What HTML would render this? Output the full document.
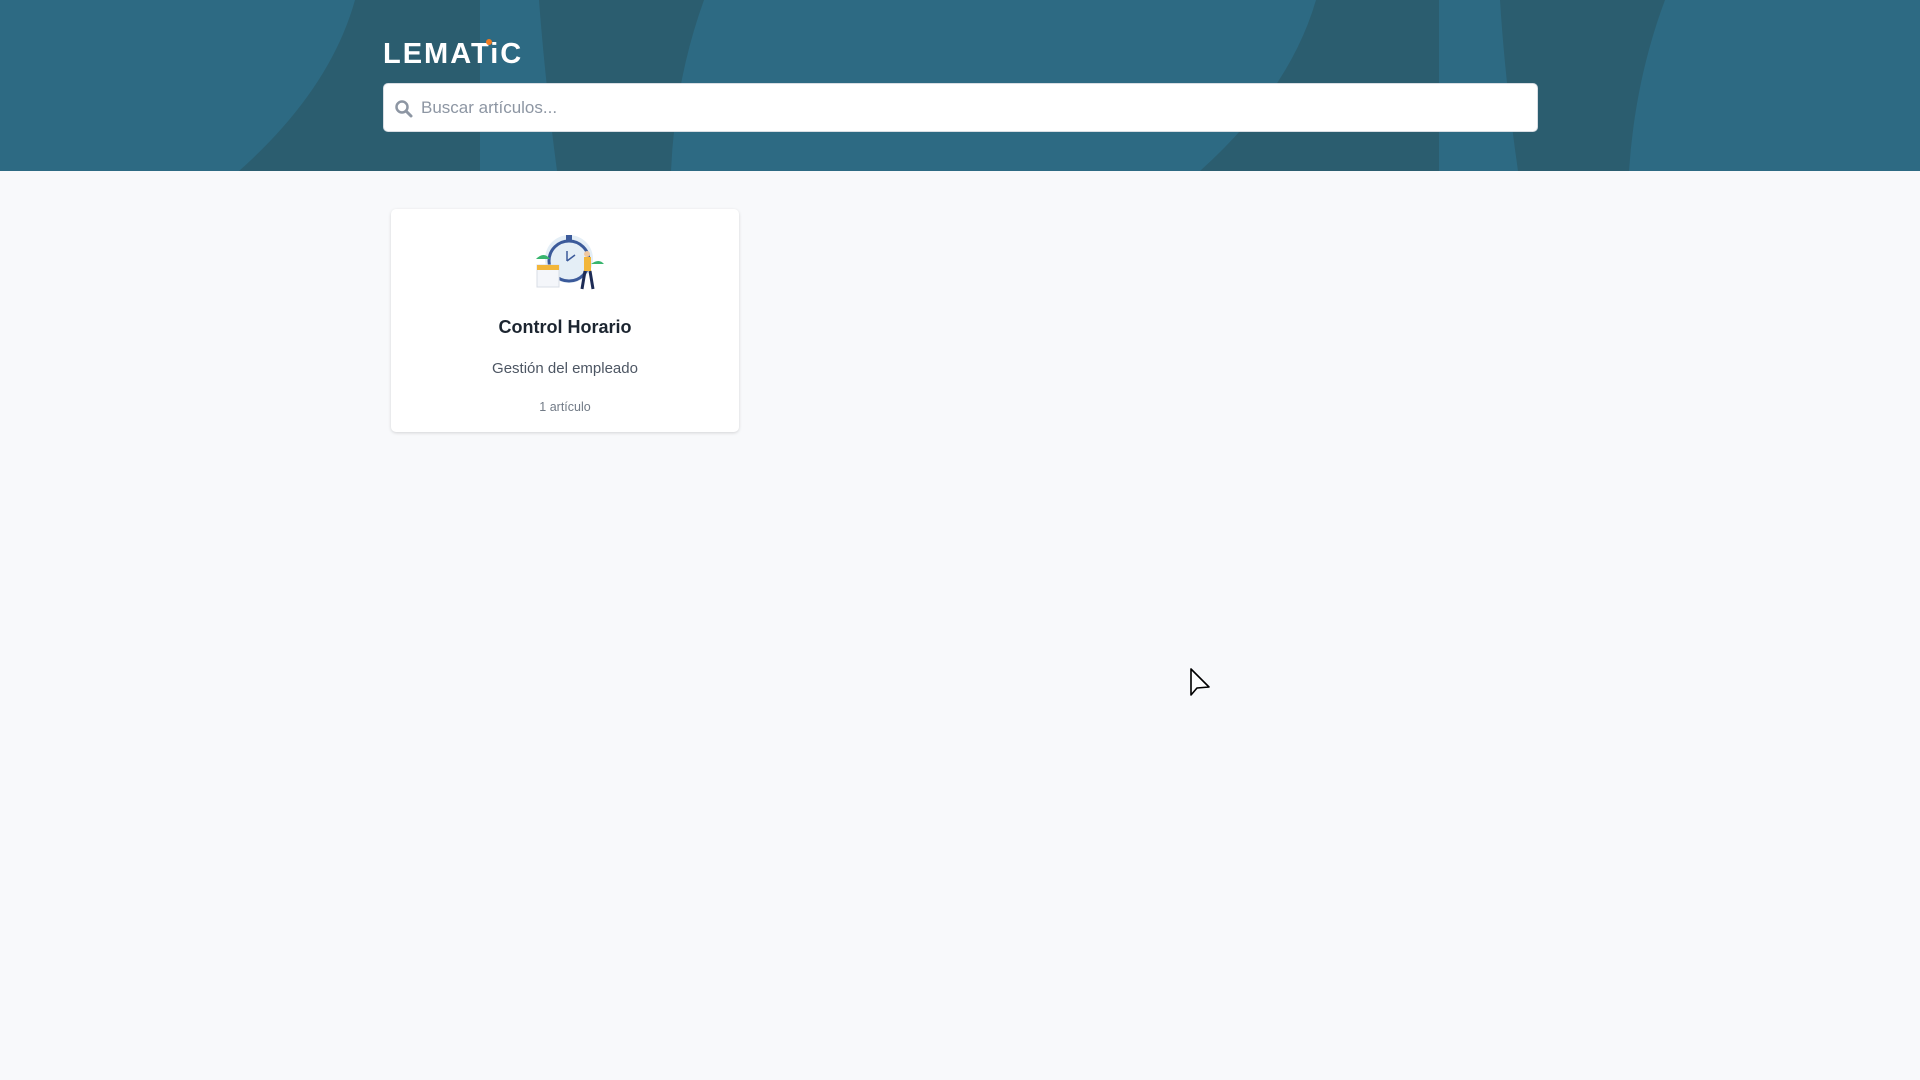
<!DOCTYPE html>
<html><head><meta charset="utf-8"><style>
body{margin:0;width:1920px;height:1080px;background:#f8f9fb;font-family:"Liberation Sans",sans-serif;overflow:hidden;position:relative}
.hdr{position:absolute;left:0;top:0;width:1920px;height:171px;background:#2d6a83;overflow:hidden}
.logo{position:absolute;left:383px;top:38px;color:#fff;font-weight:bold;font-size:29px;letter-spacing:2px}
.search{position:absolute;left:383px;top:83px;width:1155px;height:49px;background:#fff;border-radius:5px;box-sizing:border-box;border:1px solid #d8dde3}
.search span{position:absolute;left:37px;top:14px;font-size:17px;color:#8d96a3}
.card{position:absolute;left:391px;top:209px;width:348px;height:223px;background:#fff;border-radius:5px;box-shadow:0 1px 3px rgba(0,0,0,.15);text-align:center}
.t{position:absolute;top:108px;width:100%;font-size:18px;font-weight:bold;color:#1c2530}
.s{position:absolute;top:151px;width:100%;font-size:15px;color:#4d5663}
.c{position:absolute;top:191px;width:100%;font-size:12.5px;color:#717a86}
</style></head><body>
<div class="hdr">
<svg width="1920" height="171" style="position:absolute;left:0;top:0">
<g fill="#2b5d6f">
<path d="M355 0 L480 0 L480 171 L239 171 Q330 90 355 0Z"/>
<path d="M539 0 L704 0 Q675 80 671 171 L557 171 Q545 80 539 0Z"/>
<path d="M1316 0 L1439 0 L1439 171 L1200 171 Q1290 90 1316 0Z"/>
<path d="M1500 0 L1665 0 Q1635 80 1629 171 L1518 171 Q1505 80 1500 0Z"/>
</g>
</svg>
<div class="logo">LEMATiC<span style="position:absolute;left:103px;top:1px;width:6px;height:6px;border-radius:3px;background:#f07c22"></span></div>
<div class="search">
<svg width="20" height="20" style="position:absolute;left:10px;top:15px" viewBox="0 0 20 20"><circle cx="8" cy="8" r="5.5" fill="none" stroke="#8d96a3" stroke-width="2.5"/><path d="M12 12l5 5" stroke="#8d96a3" stroke-width="3" stroke-linecap="round"/></svg>
<span>Buscar artículos...</span></div>
</div>
<div class="card">
<svg width="80" height="70" style="position:absolute;left:140px;top:20px" viewBox="0 0 80 70">
<circle cx="38" cy="30" r="24" fill="#e4eef6"/>
<circle cx="38" cy="32" r="20" fill="none" stroke="#3b5a9a" stroke-width="3"/>
<rect x="35" y="6" width="6" height="5" fill="#3b5a9a"/>
<path d="M36 32l0-10M36 32l8-6" stroke="#3b5a9a" stroke-width="1.5"/>
<path d="M5 30q8-8 14 0M60 35q8-6 13 0" fill="#38b56e"/>
<rect x="6" y="36" width="22" height="22" fill="#f4f6fa" stroke="#d8dde6"/>
<rect x="6" y="36" width="22" height="5" fill="#f2b63a"/>
<rect x="53" y="28" width="7" height="14" fill="#f2b63a"/>
<path d="M54 42l-3 18M59 42l3 18" stroke="#1d2b55" stroke-width="3"/>
<circle cx="56" cy="25" r="3" fill="#f0c8a0"/>
</svg>
<div class="t">Control Horario</div>
<div class="s">Gestión del empleado</div>
<div class="c">1 artículo</div>
</div>
<svg width="24" height="32" style="position:absolute;left:1189px;top:667px" viewBox="0 0 24 32"><path d="M2 2L2 28L8 21L20 20Z" fill="#fff" stroke="#000" stroke-width="1.6" stroke-linejoin="round"/></svg>
</body></html>
